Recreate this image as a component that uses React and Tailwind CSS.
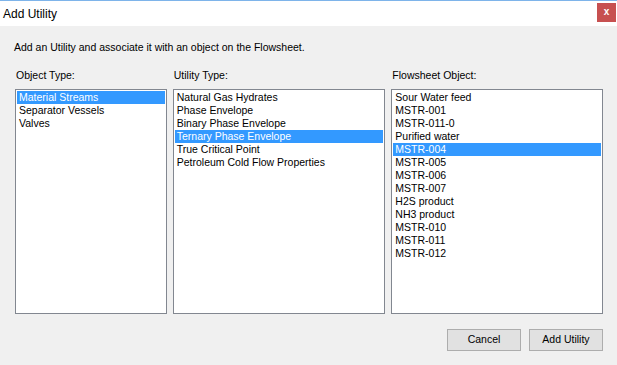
import React from 'react';

const objectTypes = ['Material Streams', 'Separator Vessels', 'Valves'];
const utilityTypes = [
  'Natural Gas Hydrates',
  'Phase Envelope',
  'Binary Phase Envelope',
  'Ternary Phase Envelope',
  'True Critical Point',
  'Petroleum Cold Flow Properties',
];
const flowsheetObjects = [
  'Sour Water feed',
  'MSTR-001',
  'MSTR-011-0',
  'Purified water',
  'MSTR-004',
  'MSTR-005',
  'MSTR-006',
  'MSTR-007',
  'H2S product',
  'NH3 product',
  'MSTR-010',
  'MSTR-011',
  'MSTR-012',
];

const ListBox = ({ label, items, selected, width }) => (
  <div className="flex flex-col" style={{ width }}>
    <div className="h-[20px] pl-[1px] leading-[13px]">{label}</div>
    <div className="h-[225px] bg-white border border-[#828790] p-[1px]">
      {items.map((item, i) => (
        <div
          key={item}
          className={
            i === selected
              ? 'h-[13px] leading-[13px] pl-[2px] bg-[#3399ff] text-white whitespace-nowrap'
              : 'h-[13px] leading-[13px] pl-[2px] whitespace-nowrap'
          }
        >
          {item}
        </div>
      ))}
    </div>
  </div>
);

const App = () => {
  return (
    <div
      className="w-[617px] h-[365px] bg-[#f0f0f0] text-[10.5px] text-black flex flex-col overflow-hidden"
      style={{ fontFamily: '"Liberation Sans", Arial, sans-serif' }}
    >
      {/* Title bar */}
      <div className="h-[26px] bg-white border-t border-[#7eb4ea] flex items-center justify-between pl-[3px]">
        <span className="text-[12px]">Add Utility</span>
        <div className="w-[19px] h-[19px] mr-[1px] mb-[3px] bg-[#c75050] flex items-center justify-center text-white font-bold text-[10px] leading-none">
          x
        </div>
      </div>

      {/* Body */}
      <div className="flex flex-col pl-[14px] pr-[14px]">
        <div className="mt-[15px] h-[13px] leading-[13px]">
          Add an Utility and associate it with an object on the Flowsheet.
        </div>

        <div className="mt-[15px] flex gap-[6px] pl-[1px]">
          <ListBox label="Object Type:" items={objectTypes} selected={0} width={152} />
          <ListBox label="Utility Type:" items={utilityTypes} selected={3} width={213} />
          <ListBox label="Flowsheet Object:" items={flowsheetObjects} selected={4} width={212} />
        </div>

        <div className="mt-[15px] flex justify-end gap-[8px]">
          <button className="w-[74px] h-[22px] bg-[#e1e1e1] border border-[#adadad] text-[10.5px]">
            Cancel
          </button>
          <button className="w-[74px] h-[22px] bg-[#e1e1e1] border border-[#adadad] text-[10.5px]">
            Add Utility
          </button>
        </div>
      </div>
    </div>
  );
};

export default App;
